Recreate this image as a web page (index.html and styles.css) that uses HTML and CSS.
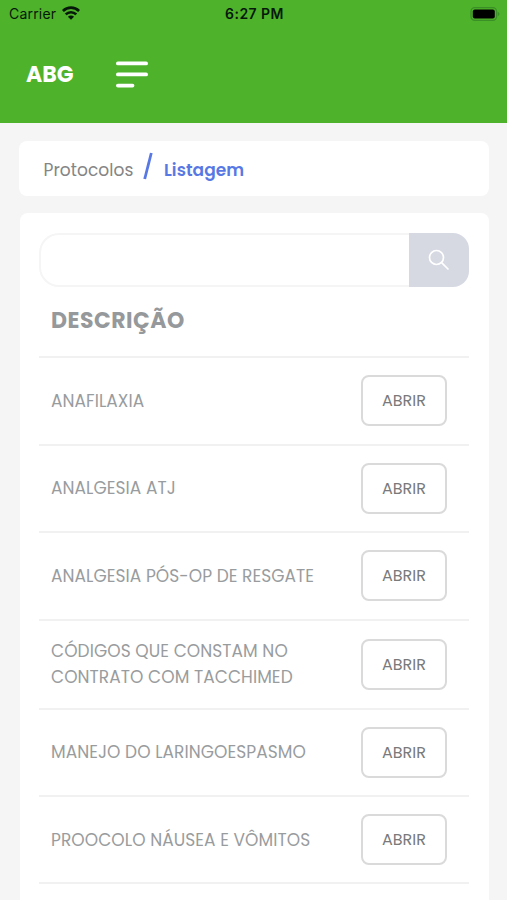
FILE: index.html
```html
<!DOCTYPE html>
<html lang="pt-BR">
<head>
<meta charset="utf-8">
<meta name="viewport" content="width=device-width, initial-scale=1">
<title>Protocolos</title>
<link rel="stylesheet" href="styles.css">
</head>
<body>
<header class="header">
  <div class="status">
    <div class="carrier"><span>Carrier</span>
      <svg class="wifi" viewBox="0 0 18 14" width="18" height="14" fill="none" stroke="#06180a" stroke-width="2.700"><path d="M.9 5C5.500.5 12.500.5 17.100 5M3.700 8.400c3-2.900 7.600-2.900 10.600 0"/><path d="M9 13.700 5.900 10.700c1.700-1.600 4.500-1.600 6.200 0z" fill="#06180a" stroke="none"/></svg>
    </div>
    <time class="clock">6:27 PM</time>
    <svg class="battery" viewBox="0 0 30 14" width="30" height="14"><rect x="1" y=".7" width="25.600" height="12.600" rx="3.800" fill="none" stroke="#3a8f27" stroke-width="1.300"/><rect x="2.800" y="2.500" width="22" height="9" rx="2" fill="#000"/><path d="M27.800 5c2.200.5 2.200 3.500 0 4z" fill="#3a8f27"/></svg>
  </div>
  <div class="bar">
    <strong class="brand">ABG</strong>
    <svg width="32" height="27" viewBox="0 0 32 27" stroke="#fff" stroke-width="3.800" stroke-linecap="round"><path d="M1.900 2.400h28.200M1.900 13.400h28.200M1.900 24.600h14.600"/></svg>
  </div>
</header>
<main class="main">
  <nav class="crumbs">
    <span class="crumb">Protocolos</span>
    <svg class="slash" width="10" height="28" viewBox="0 0 10 28" stroke="#5878e4" stroke-width="2.800"><path d="M1.700 27 8.300 1"/></svg>
    <span class="current">Listagem</span>
  </nav>
  <section class="card">
    <div class="search">
      <input class="field" type="text" aria-label="Buscar">
      <button class="go" aria-label="Pesquisar"><svg width="22" height="22" viewBox="0 0 22 22" fill="none" stroke="#fff" stroke-width="1.700" stroke-linecap="round"><circle cx="8.500" cy="8.500" r="7"/><path d="m13.600 13.600 6.400 6.400"/></svg></button>
    </div>
    <h2 class="title">DESCRIÇÃO</h2>
    <ul class="list">
      <li class="row"><span class="name">ANAFILAXIA</span><button class="open">ABRIR</button></li>
      <li class="row"><span class="name">ANALGESIA ATJ</span><button class="open">ABRIR</button></li>
      <li class="row"><span class="name">ANALGESIA PÓS-OP DE RESGATE</span><button class="open">ABRIR</button></li>
      <li class="row tall"><span class="name">CÓDIGOS QUE CONSTAM NO<br>CONTRATO COM TACCHIMED</span><button class="open">ABRIR</button></li>
      <li class="row"><span class="name">MANEJO DO LARINGOESPASMO</span><button class="open">ABRIR</button></li>
      <li class="row last"><span class="name">PROOCOLO NÁUSEA E VÔMITOS</span><button class="open">ABRIR</button></li>
    </ul>
  </section>
</main>
</body>
</html>
```
FILE: styles.css
```css
* { box-sizing: border-box; }
body { margin: 0; height: 900px; background: #f5f5f5; font-family: Poppins, Inter, sans-serif; }
.header { height: 123px; background: #4eb22b; }
.status { height: 28px; padding: 0 7px 0 9px; display: grid; grid-template-columns: 1fr auto 1fr; align-items: center; font-family: Inter, sans-serif; color: #06180a; }
.carrier { display: flex; align-items: center; gap: 6px; margin-top: -2px; font-size: 14px; letter-spacing: .2px; }
.wifi { margin-top: -1px; }
.clock { margin: -2px 0 0; font-size: 14px; font-weight: 600; letter-spacing: .45px; }
.battery { justify-self: end; margin-top: -1px; }
.bar { height: 92px; padding-left: 26px; display: flex; align-items: center; gap: 42px; }
.brand { width: 48px; font-size: 22px; font-weight: 700; color: #fff; white-space: nowrap; }
.main { padding: 18px 18px 0 19px; }
.crumbs { height: 55px; padding: 2px 0 0 24.500px; display: flex; align-items: center; background: #fff; border-radius: 8px; font-size: 17px; }
.crumb { width: 91px; margin-right: 8.500px; letter-spacing: .07px; color: #858585; white-space: nowrap; }
.slash { margin: -7px 11px 0 0; }
.current { color: #5878e4; font-weight: 600; letter-spacing: .05px; }
.card { height: 687px; margin: 17px 0 0 1px; padding: 20px 20px 0 19px; background: #fff; border-radius: 8px 8px 0 0; }
.search { height: 54px; display: flex; }
.field { flex: 1; min-width: 0; border: 2px solid #f5f5f6; border-right: 0; border-radius: 20px 0 0 20px; background: #fff; outline: 0; }
.go { width: 60px; padding: 0 1px 1px 0; display: flex; align-items: center; justify-content: center; border: 0; border-radius: 0 16px 16px 0; background: #d6d9e2; }
.title { height: 69px; margin: 0; padding-left: 12px; line-height: 68px; font-size: 22px; font-weight: 700; letter-spacing: .5px; color: #96999b; }
.list { margin: 0; padding: 0; list-style: none; }
.row { height: 87.600px; padding: 0 22px 0 12px; display: flex; align-items: center; justify-content: space-between; border-top: 2px solid #f1f1f2; }
.tall { height: 88.800px; }
.last { height: 89.300px; border-bottom: 2px solid #f1f1f2; }
.name { font-size: 17px; line-height: 26px; letter-spacing: .06px; color: #999c9e; white-space: nowrap; }
.open { width: 86px; height: 51px; padding: 0; border: 2px solid #dadada; border-radius: 8px; background: #fff; color: #7a7a7a; font: 400 16px Poppins, Inter, sans-serif; }
```
